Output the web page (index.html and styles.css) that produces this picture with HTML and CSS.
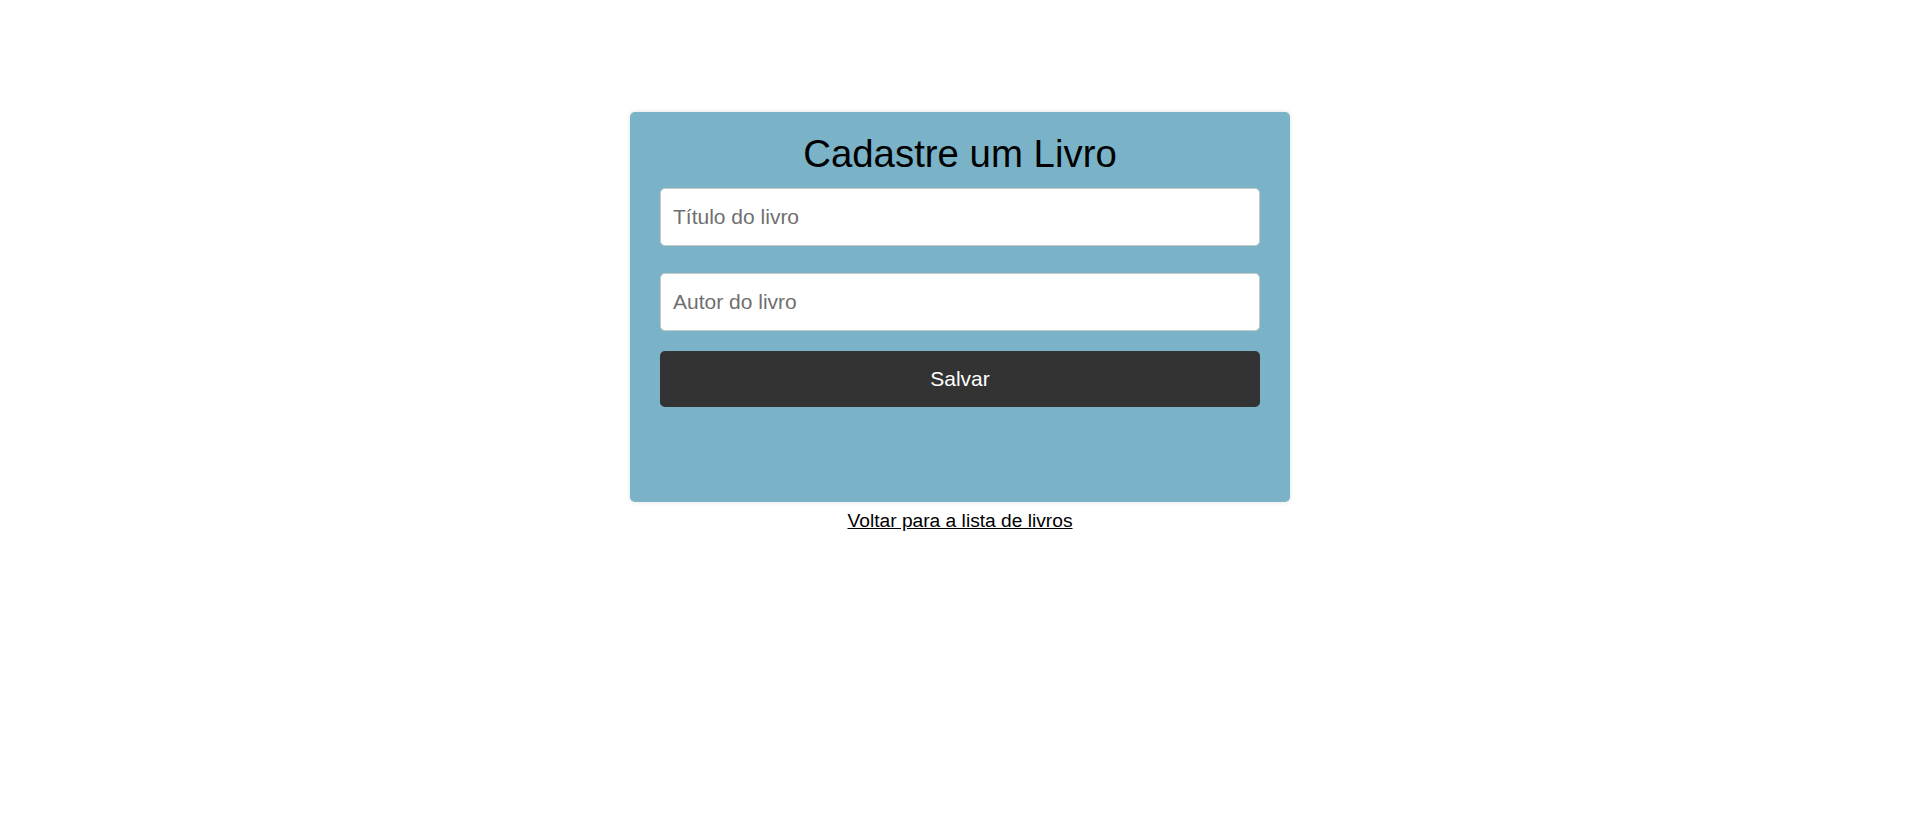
FILE: index.html
```html
<!DOCTYPE html>
<html lang="pt-BR">
<head>
<meta charset="utf-8">
<title>Cadastre um Livro</title>
<link rel="stylesheet" href="styles.css">
</head>
<body>
<main class="page">
  <section class="card">
    <h1 class="card-title">Cadastre um Livro</h1>
    <form class="book-form">
      <input class="field" type="text" placeholder="Título do livro">
      <input class="field" type="text" placeholder="Autor do livro">
      <button class="save-btn" type="button">Salvar</button>
    </form>
  </section>
  <a class="back-link" href="#">Voltar para a lista de livros</a>
</main>
</body>
</html>
```
FILE: styles.css
```css
html, body {
  margin: 0;
  padding: 0;
  background: #ffffff;
}

body {
  font-family: "Liberation Sans", Arial, sans-serif;
  color: #000;
}

.page {
  display: flex;
  flex-direction: column;
  align-items: center;
  padding-top: 112px;
  padding-left: 7px;
}

.card {
  box-sizing: border-box;
  width: 660px;
  height: 390px;
  padding: 20px 30px 0;
  background: #7ab3c8;
  border-radius: 5px;
  box-shadow: 0 0 5px rgba(0, 0, 0, 0.12);
}

.card-title {
  margin: 0 0 12px;
  font-size: 38.4px;
  font-weight: normal;
  line-height: 44px;
  text-align: center;
}

.book-form {
  display: flex;
  flex-direction: column;
}

.field {
  box-sizing: border-box;
  height: 58px;
  width: 100%;
  margin: 0 0 27px;
  padding: 0 12px;
  border: 1px solid #c8c8c8;
  border-radius: 5px;
  background: #fff;
  font-family: "Liberation Sans", Arial, sans-serif;
  font-size: 21px;
  color: #333;
  outline: none;
}

.field:nth-of-type(2) {
  margin-bottom: 20px;
}

.field::placeholder {
  color: #6f6f6f;
}

.save-btn {
  box-sizing: border-box;
  height: 56px;
  width: 100%;
  border: none;
  border-radius: 5px;
  background: #333333;
  color: #ffffff;
  font-family: "Liberation Sans", Arial, sans-serif;
  font-size: 21px;
  cursor: pointer;
}

.back-link {
  margin-top: 8px;
  font-size: 19.2px;
  color: #000;
  text-decoration: underline;
}
```
